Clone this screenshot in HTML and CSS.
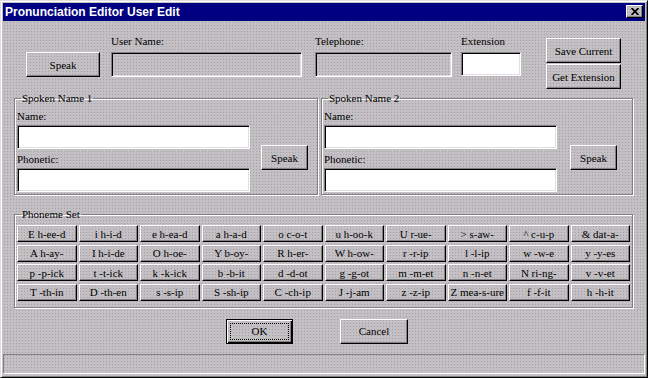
FILE: index.html
```html
<!DOCTYPE html>
<html lang="en">
<head>
    <meta charset="UTF-8">
    <title>Pronunciation Editor User Edit</title>
    <link rel="stylesheet" href="styles.css">
</head>
<body>
    <div class="window">
        <!-- title bar -->
        <div class="titlebar">
            <span class="title">Pronunciation Editor User Edit</span>
            <button class="close-btn">
                <svg width="8" height="7" viewBox="0 0 8 7"><path d="M0.5 0 L7.5 7 M7.5 0 L0.5 7" stroke="#000" stroke-width="1.8"/></svg>
            </button>
        </div>

        <!-- user info row -->
        <div class="top-row">
            <button class="btn speak-top">Speak</button>
            <div class="field user-field">
                <label>User Name:</label>
                <input type="text" class="input readonly" readonly>
            </div>
            <div class="field phone-field">
                <label>Telephone:</label>
                <input type="text" class="input readonly" readonly>
            </div>
            <div class="field ext-field">
                <label>Extension</label>
                <input type="text" class="input ext-input">
            </div>
            <div class="side-btns">
                <button class="btn">Save Current</button>
                <button class="btn">Get Extension</button>
            </div>
        </div>

        <!-- spoken names -->
        <div class="names-row">
            <fieldset class="group name-group group-1">
                <legend>Spoken Name 1</legend>
                <div class="name-fields">
                    <label>Name:</label>
                    <input type="text" class="input">
                    <label class="second">Phonetic:</label>
                    <input type="text" class="input">
                </div>
                <button class="btn speak-btn">Speak</button>
            </fieldset>
            <fieldset class="group name-group group-2">
                <legend>Spoken Name 2</legend>
                <div class="name-fields">
                    <label>Name:</label>
                    <input type="text" class="input">
                    <label class="second">Phonetic:</label>
                    <input type="text" class="input">
                </div>
                <button class="btn speak-btn">Speak</button>
            </fieldset>
        </div>

        <!-- phoneme buttons -->
        <fieldset class="group phoneme-group">
            <legend>Phoneme Set</legend>
            <div class="phoneme-grid">
                <button class="btn">E h-ee-d</button>
                <button class="btn">i h-i-d</button>
                <button class="btn">e h-ea-d</button>
                <button class="btn">a h-a-d</button>
                <button class="btn">o c-o-t</button>
                <button class="btn">u h-oo-k</button>
                <button class="btn">U r-ue-</button>
                <button class="btn">&gt; s-aw-</button>
                <button class="btn">^ c-u-p</button>
                <button class="btn">&amp; dat-a-</button>

                <button class="btn">A h-ay-</button>
                <button class="btn">I h-i-de</button>
                <button class="btn">O h-oe-</button>
                <button class="btn">Y b-oy-</button>
                <button class="btn">R h-er-</button>
                <button class="btn">W h-ow-</button>
                <button class="btn">r -r-ip</button>
                <button class="btn">l -l-ip</button>
                <button class="btn">w -w-e</button>
                <button class="btn">y -y-es</button>

                <button class="btn">p -p-ick</button>
                <button class="btn">t -t-ick</button>
                <button class="btn">k -k-ick</button>
                <button class="btn">b -b-it</button>
                <button class="btn">d -d-ot</button>
                <button class="btn">g -g-ot</button>
                <button class="btn">m -m-et</button>
                <button class="btn">n -n-et</button>
                <button class="btn">N ri-ng-</button>
                <button class="btn">v -v-et</button>

                <button class="btn">T -th-in</button>
                <button class="btn">D -th-en</button>
                <button class="btn">s -s-ip</button>
                <button class="btn">S -sh-ip</button>
                <button class="btn">C -ch-ip</button>
                <button class="btn">J -j-am</button>
                <button class="btn">z -z-ip</button>
                <button class="btn">Z mea-s-ure</button>
                <button class="btn">f -f-it</button>
                <button class="btn">h -h-it</button>
            </div>
        </fieldset>

        <!-- OK / Cancel -->
        <div class="dialog-btns">
            <button class="btn default-btn"><span class="focus">OK</span></button>
            <button class="btn cancel-btn">Cancel</button>
        </div>

        <div class="status-bar"></div>
    </div>
</body>
</html>
```

FILE: styles.css
```css
body {
    margin: 0;
    padding: 0;
    background-color: #c0c0c0;
}

/* dithered dialog grey */
.window,
.btn,
.close-btn,
.input.readonly {
    background-color: #c3c0c3;
    background-image: conic-gradient(from 90deg at 1px 1px, transparent 0 180deg, #a89ca8 0 270deg, transparent 0);
    background-size: 3px 3px;
}

.window {
    width: 648px;
    height: 378px;
    box-sizing: border-box;
    padding: 2px;
    border: 1px solid;
    border-color: #dfdfdf #000 #000 #dfdfdf;
    box-shadow: inset 1px 1px #fff, inset -1px -1px #808080;
    font-family: "Liberation Serif", "Times New Roman", serif;
    font-size: 11px;
    color: #000;
}

/* title bar */
.titlebar {
    height: 18px;
    background: #000080;
    display: flex;
    align-items: flex-start;
    justify-content: space-between;
    padding-left: 2px;
}

.title {
    font-family: "Liberation Sans", Arial, sans-serif;
    font-weight: bold;
    font-size: 12px;
    line-height: 18px;
    color: #fff;
}

.close-btn {
    width: 17px;
    height: 13px;
    margin: 2px 2px 0 0;
    padding: 0;
    display: flex;
    align-items: center;
    justify-content: center;
    border: 1px solid;
    border-color: #fff #000 #000 #fff;
    box-shadow: inset -1px -1px #808080;
}

/* generic controls */
.btn {
    font-family: "Liberation Serif", "Times New Roman", serif;
    font-size: 11px;
    color: #000;
    border: 1px solid;
    border-color: #fff #000 #000 #fff;
    box-shadow: inset -1px -1px #808080;
    padding: 0;
    margin: 0;
    white-space: nowrap;
}

.input {
    box-sizing: border-box;
    display: block;
    margin: 0;
    height: 24px;
    border: 1px solid;
    border-color: #808080 #fff #fff #808080;
    box-shadow: inset 1px 1px #000, inset -1px -1px #dfdfdf;
    background-color: #fff;
    outline: none;
}

.input.readonly {
    height: 25px;
}

label {
    display: block;
    line-height: 14px;
    height: 14px;
}

/* top row */
.top-row {
    display: flex;
    align-items: flex-start;
    margin-top: 13px;
    height: 55px;
}

.speak-top {
    margin: 18px 0 0 23px;
    width: 74px;
    height: 25px;
}

.field .input {
    width: 100%;
    margin-top: 4px;
}

.user-field {
    margin-left: 11px;
    width: 191px;
}

.phone-field {
    margin-left: 13px;
    width: 137px;
}

.ext-field {
    margin-left: 9px;
    width: 60px;
}

.ext-input {
    height: 24px;
}

.side-btns {
    margin: 4px 0 0 25px;
    width: 75px;
    display: flex;
    flex-direction: column;
    gap: 1px;
}

.side-btns .btn {
    height: 25px;
}

/* group boxes */
.group {
    margin: 0;
    min-width: 0;
    box-sizing: border-box;
    border: 1px solid #808080;
    box-shadow: inset 1px 1px #fff, 1px 1px #fff;
    padding: 4px 2px 2px 2px;
}

.group legend {
    margin-left: 4px;
    padding: 0 1px;
    line-height: 14px;
    font-size: 11px;
}

.names-row {
    display: flex;
    gap: 3px;
    margin: 2px 0 0 11px;
}

.name-group {
    display: flex;
    align-items: flex-start;
}

.group-1 {
    width: 304px;
}

.group-2 {
    width: 312px;
}

.name-fields {
    width: 233px;
}

.name-fields .input {
    width: 100%;
    margin-top: 2px;
}

.name-fields .second {
    margin-top: 3px;
}

.speak-btn {
    width: 47px;
    height: 25px;
    margin: 36px 0 0 11px;
}

.group-2 .speak-btn {
    margin-left: 13px;
}

/* phoneme set */
.phoneme-group {
    width: 619px;
    margin: 12px 0 0 11px;
    padding-bottom: 6px;
}

.phoneme-grid {
    display: grid;
    grid-template-columns: repeat(10, 1fr);
    grid-template-rows: repeat(4, 17px);
    column-gap: 2px;
    row-gap: 2.67px;
}

.phoneme-grid .btn {
    height: 17px;
}

/* bottom buttons */
.dialog-btns {
    display: flex;
    gap: 47px;
    margin-top: 11px;
    padding-left: 223px;
}

.default-btn {
    width: 67px;
    height: 25px;
    border: 1px solid #000;
    box-shadow: inset 1px 1px #fff, inset -1px -1px #000, inset -2px -2px #808080;
    padding: 3px;
    display: flex;
}

.default-btn .focus {
    flex: 1;
    border: 1px dotted #000;
    display: flex;
    align-items: center;
    justify-content: center;
}

.cancel-btn {
    width: 68px;
    height: 25px;
}

.status-bar {
    margin-top: 10px;
    height: 20px;
    box-sizing: border-box;
    border: 1px solid;
    border-color: #808080 #fff #fff #808080;
}
```
